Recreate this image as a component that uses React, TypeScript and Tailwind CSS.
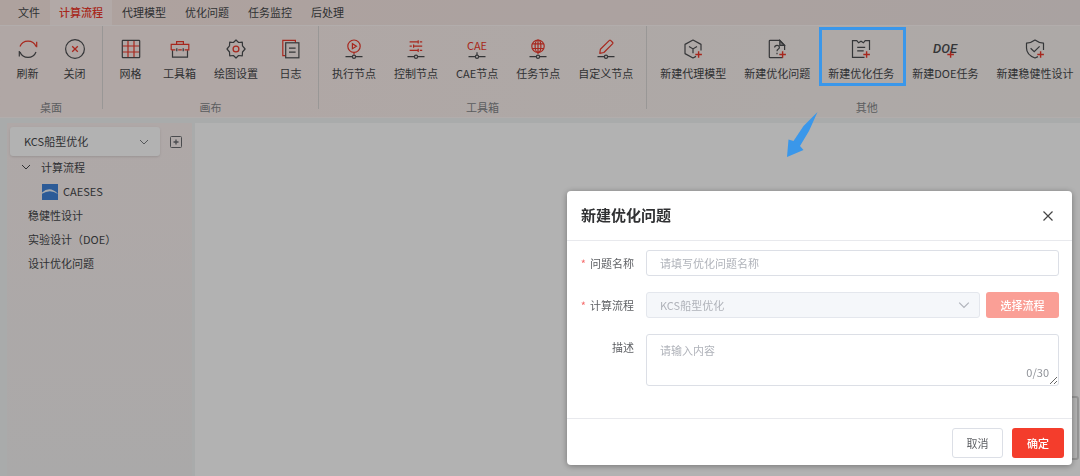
import { PropsWithChildren, ReactNode } from "react";

const RED = "#f0392b";
const INK = "#4c4e51";

const menus = ["文件", "计算流程", "代理模型", "优化问题", "任务监控", "后处理"];

function Icon({ children }: PropsWithChildren) {
  return (
    <svg
      viewBox="0 0 22 22"
      className="h-[22px] w-[22px] overflow-visible"
      fill="none"
      stroke={INK}
      strokeWidth="1.2"
      aria-hidden="true"
    >
      {children}
    </svg>
  );
}

// small connector drawn below every node icon
function NodeBase({ stem = false }: { stem?: boolean }) {
  return (
    <>
      <path d="M2.5 18.7h6.7M12.8 18.7h6.7" />
      <circle cx="11" cy="18.7" r="1.6" />
      {stem && <path d="M11 14.2v2.9" />}
    </>
  );
}

function Plus() {
  return <path d="M13.3 16.5h6.6M16.6 13.2v6.6" stroke={RED} strokeWidth="1.4" />;
}

const icons: Record<string, ReactNode> = {
  refresh: (
    <>
      <path d="M3 8.5A8.6 8.6 0 0 1 19 8.5M19.7 3.8v5.4" stroke={RED} />
      <path d="M19 14A8.6 8.6 0 0 1 3 14M2.3 18.4V13" />
    </>
  ),
  close: (
    <>
      <circle cx="11" cy="11" r="9.4" />
      <path d="m8.2 8.2 5.6 5.6M13.8 8.2l-5.6 5.6" stroke={RED} strokeWidth="1.3" />
    </>
  ),
  grid: (
    <>
      <path d="M8 2.5v17M14 2.5v17M2.5 8h17M2.5 14h17" stroke={RED} />
      <rect x="2.3" y="2.3" width="17.4" height="17.4" rx="0.6" />
    </>
  ),
  toolbox: (
    <>
      <path d="M3.5 12.3v6.9h15v-6.9M7.8 10.3v3M14.2 10.3v3" />
      <path d="M7.6 6.3V3.6h6.8v2.7M2.2 11.9V6.4h17.6v5.5h-4.2M2.2 11.9h4.2M9.2 11.9h3.6" stroke={RED} />
    </>
  ),
  gear: (
    <>
      <path
        d="m11 2 2.6 2.5 3.7-.4.2 3.8 2.6 3.1-2.6 3-.2 3.8-3.7-.3L11 20l-2.6-2.5-3.7.3-.2-3.8L2 11l2.5-3.1.2-3.8 3.7.4Z"
        strokeLinejoin="round"
      />
      <circle cx="11" cy="11" r="2.9" stroke={RED} strokeWidth="1.3" />
    </>
  ),
  log: (
    <>
      <path d="M5 17.6H2.8V2.3h12.6v2.2" stroke={RED} />
      <rect x="5.7" y="4.8" width="13.2" height="15" />
      <path d="M9 10.2h6.6M9 14.2h6.6" />
    </>
  ),
  run: (
    <>
      <circle cx="11" cy="8.2" r="6.2" stroke={RED} />
      <path d="M9.4 5.7v5l4-2.5ZM11 14.4v2" stroke={RED} />
      <NodeBase />
    </>
  ),
  control: (
    <>
      <path
        d="M4.6 3.8h8M14.8 3.8h2.4M13.2 2.2v3.2M4.6 8.1h2.2M9 8.1h8.2M8.6 6.5v3.2M4.6 12.4h8M14.8 12.4h2.4M13.2 10.8V14"
        stroke={RED}
      />
      <NodeBase />
    </>
  ),
  cae: (
    <>
      <text x="11" y="12" textAnchor="middle" fontSize="11" fill={RED} stroke="none">
        CAE
      </text>
      <NodeBase stem />
    </>
  ),
  task: (
    <>
      <circle cx="11" cy="8.2" r="6.2" stroke={RED} />
      <ellipse cx="11" cy="8.2" rx="2.9" ry="6.2" stroke={RED} />
      <path d="M5.4 5.9h11.2M5.4 10.5h11.2M11 2v14" stroke={RED} />
      <NodeBase />
    </>
  ),
  custom: (
    <>
      <path
        d="m4.8 15.4.6-4.2 9-8.8q.6-.5 1.2 0l2.1 2.1q.5.6 0 1.2l-8.8 8.8Z"
        stroke={RED}
        strokeLinejoin="round"
      />
      <NodeBase />
    </>
  ),
  model: (
    <>
      <path d="M19 12.5V6.4L11 2 3 6.4v9.2l8 4.4 3-1.6" strokeLinejoin="round" />
      <path d="m7 8.4 4 2.5 4-2.5M11 10.9v4.3" />
      <Plus />
    </>
  ),
  problem: (
    <>
      <path d="M18.6 12V7.3l-4.8-5H4.1q-.8 0-.8.8v15.8q0 .8.8.8h12.6" />
      <path d="M13.8 2.5v4.8h4.6Z" fill={INK} fillOpacity="0.4" />
      <path d="M8.6 9.5q.2-2.2 2.4-2.2t2.4 2q0 1.3-1.3 2-1.1.7-1.1 2M11 14.8v1.4" />
      <Plus />
    </>
  ),
  optimize: (
    <>
      <path d="M19.5 12V2.6h-4.3l-1.8 2.2-2.4-1.6-2.4 1.6-1.8-2.2H2.5v16.8h12" />
      <path d="M7.2 9.3h8M7.2 12.8h6.5" />
      <Plus />
    </>
  ),
  doe: (
    <>
      <text
        x="11"
        y="15"
        textAnchor="middle"
        fontSize="13"
        fontStyle="italic"
        fontWeight="500"
        fontFamily="Liberation Sans Narrow, Roboto, sans-serif"
        fill={INK}
        stroke="none"
      >
        DOE
      </text>
      <Plus />
    </>
  ),
  robust: (
    <>
      <path d="M19.5 12V5.2Q14.7 4.8 11 2 7.3 4.8 2.5 5.2V10q0 6.8 8.5 10l3-1.4" strokeLinejoin="round" />
      <path d="m6.6 10.3 3.6 3.4 5.4-5.4" />
      <Plus />
    </>
  ),
};

const groups = [
  {
    title: "桌面",
    items: [
      { icon: "refresh", label: "刷新" },
      { icon: "close", label: "关闭" },
    ],
  },
  {
    title: "画布",
    items: [
      { icon: "grid", label: "网格" },
      { icon: "toolbox", label: "工具箱" },
      { icon: "gear", label: "绘图设置" },
      { icon: "log", label: "日志" },
    ],
  },
  {
    title: "工具箱",
    items: [
      { icon: "run", label: "执行节点" },
      { icon: "control", label: "控制节点" },
      { icon: "cae", label: "CAE节点" },
      { icon: "task", label: "任务节点" },
      { icon: "custom", label: "自定义节点" },
    ],
  },
  {
    title: "其他",
    items: [
      { icon: "model", label: "新建代理模型" },
      { icon: "problem", label: "新建优化问题" },
      { icon: "optimize", label: "新建优化任务", marked: true },
      { icon: "doe", label: "新建DOE任务" },
      { icon: "robust", label: "新建稳健性设计" },
    ],
  },
];

function MenuBar() {
  return (
    <nav className="flex h-[25px] shrink-0 gap-px bg-linear-to-r from-[#fae9e3] to-[#f3e9e7] pl-[9px]">
      {menus.map((menu) => (
        <button
          key={menu}
          className={
            menu === "计算流程"
              ? "bg-[#fff3f0] px-[9px] font-medium text-[#f0392b]"
              : "px-[9px] text-[#45474a]"
          }
        >
          {menu}
        </button>
      ))}
    </nav>
  );
}

function Ribbon() {
  return (
    <div className="flex h-[93px] shrink-0 border-y border-[#fff8f6] bg-linear-to-r from-[#fdefec] to-[#f8f3f0]">
      {groups.map((group) => (
        <section
          key={group.title}
          className="flex h-[83px] shrink-0 flex-col border-r border-[#dcd8d7] px-1 last:border-r-0"
        >
          <div className="flex pt-[3px]">
            {group.items.map((item) => (
              <button
                key={item.label}
                className="flex min-w-[47px] flex-col items-center px-[9px] pt-[9px] pb-1"
              >
                <Icon>{icons[item.icon]}</Icon>
                <span className="mt-[5px] leading-4 whitespace-nowrap">{item.label}</span>
              </button>
            ))}
          </div>
          <h2 className="mt-[14px] text-center leading-4 text-[#85878a]">{group.title}</h2>
        </section>
      ))}
    </div>
  );
}

// callout frame and arrow, painted above the mask
function Callout() {
  return (
    <span className="absolute -top-px -right-[3px] left-0 h-[59px] border-[3px] border-[#3a97ea]">
      <svg
        viewBox="0 0 34 48"
        className="absolute top-[80px] -left-[36px] h-[48px] w-[34px]"
        fill="#3a97ea"
        aria-hidden="true"
      >
        <path d="M31.5 2 17.5 16 7.500 31 2.500 29.500 1 47 17.500 40 14 36 23 21Z" />
      </svg>
    </span>
  );
}

function CalloutLayer() {
  // repeats the ribbon's columns invisibly so the frame follows the marked button
  return (
    <div className="pointer-events-none absolute inset-x-0 top-0 z-20 flex pt-[28px]" aria-hidden="true">
      {groups.map((group) => (
        <div key={group.title} className="flex shrink-0 border-r border-transparent px-1">
          {group.items.map((item) => (
            <div key={item.label} className="relative h-[57px] min-w-[47px] px-[9px]">
              <span className="invisible whitespace-nowrap">{item.label}</span>
              {"marked" in item && <Callout />}
            </div>
          ))}
        </div>
      ))}
    </div>
  );
}

function Chevron({ className }: { className: string }) {
  return (
    <svg viewBox="0 0 10 10" className={className} fill="none" stroke="currentColor" aria-hidden="true">
      <path d="m1 3 4 4 4-4" />
    </svg>
  );
}

function Sidebar() {
  return (
    <aside className="w-[185px] shrink-0 bg-linear-to-b from-[#fbf1f0] to-[#f4f2f2] px-[3px] pt-1">
      <div className="flex items-center">
        <div className="relative w-[150px]">
          <select
            aria-label="项目"
            className="block h-[29px] w-full appearance-none rounded-[3px] bg-white pl-[14px] shadow-sm"
          >
            <option>KCS船型优化</option>
          </select>
          <Chevron className="pointer-events-none absolute top-[10px] right-[11px] h-[10px] w-[10px] text-[#7c7e82]" />
        </div>
        <button aria-label="添加" className="ml-[10px]">
          <svg viewBox="0 0 12 12" className="h-3 w-3" fill="none" stroke="#6a6c70" aria-hidden="true">
            <rect x="0.5" y="0.5" width="11" height="11" rx="1" />
            <path d="M3.5 6h5M6 3.5v5" strokeWidth="1.3" />
          </svg>
        </button>
      </div>
      <ul className="-mt-px leading-6">
        <li>
          <div className="flex items-center pl-[11px]">
            <Chevron className="h-[10px] w-[10px]" />
            <span className="ml-[10px]">计算流程</span>
          </div>
          <div className="flex items-center pl-8">
            <svg viewBox="0 0 16 16" className="mt-[2px] h-4 w-4" aria-hidden="true">
              <path d="M0 0h16v16H0Z" fill="#3f83d8" />
              <path d="M0 8.5Q8 1.5 16 10 8 4.5 0 9.8Z" fill="#eef4fb" />
            </svg>
            <span className="ml-[5px]">CAESES</span>
          </div>
        </li>
        <li className="pl-[18px]">稳健性设计</li>
        <li className="pl-[18px]">实验设计（DOE）</li>
        <li className="pl-[18px]">设计优化问题</li>
      </ul>
    </aside>
  );
}

function Label({ htmlFor, required, children }: PropsWithChildren<{ htmlFor: string; required?: boolean }>) {
  return (
    <label htmlFor={htmlFor} className="w-[67px] shrink-0 text-right leading-[26px] text-[#606266]">
      {required && <span className="mr-1 text-[#f56c6c]">*</span>}
      {children}
    </label>
  );
}

function ProblemDialog() {
  return (
    <div className="fixed inset-0 z-10 flex items-end justify-end bg-black/30 pr-2 pb-[11px] pl-2">
      <div
        role="dialog"
        aria-labelledby="dialog-title"
        className="w-full max-w-[505px] rounded-[4px] bg-white shadow-[0_1px_6px_rgba(0,0,0,0.35)]"
      >
        <header className="flex h-[50px] items-center justify-between border-b border-[#e8e9ed] pr-[19px] pl-[14px]">
          <h1 id="dialog-title" className="text-[15px] font-bold text-[#303133]">
            新建优化问题
          </h1>
          <button aria-label="关闭">
            <svg viewBox="0 0 10 10" className="h-[10px] w-[10px]" stroke="#444" strokeWidth="1.2" aria-hidden="true">
              <path d="m.5.5 9 9M9.5.5l-9 9" />
            </svg>
          </button>
        </header>
        <form className="flex flex-col gap-4 pt-[9px] pr-[13px]">
          <div className="flex gap-3">
            <Label htmlFor="name" required>
              问题名称
            </Label>
            <input
              id="name"
              placeholder="请填写优化问题名称"
              className="h-[26px] min-w-0 flex-1 rounded-[3px] border border-[#dcdfe6] px-[13px] outline-none placeholder:text-[#b0b3ba]"
            />
          </div>
          <div className="flex gap-3">
            <Label htmlFor="flow" required>
              计算流程
            </Label>
            <div className="flex min-w-0 flex-1 gap-[6px]">
              <div className="relative flex-1 text-[#b0b3ba]">
                <select
                  id="flow"
                  disabled
                  className="block h-[26px] w-full appearance-none rounded-[3px] border border-[#e4e7ed] bg-[#f5f7fa] px-[13px] opacity-100"
                >
                  <option>KCS船型优化</option>
                </select>
                <Chevron className="pointer-events-none absolute top-[7px] right-[10px] h-3 w-3" />
              </div>
              <button
                type="button"
                disabled
                className="h-[26px] w-[73px] rounded-[3px] bg-[#fa9f96] font-medium text-white"
              >
                选择流程
              </button>
            </div>
          </div>
          <div className="flex gap-3">
            <Label htmlFor="desc">描述</Label>
            <div className="relative flex-1">
              <textarea
                id="desc"
                placeholder="请输入内容"
                className="block h-[52px] w-full resize-y rounded-[3px] border border-[#dcdfe6] px-[13px] py-[7px] leading-4 outline-none placeholder:text-[#b0b3ba]"
              />
              <span className="absolute right-[10px] bottom-[6px] leading-4 text-[#909399]">0/30</span>
            </div>
          </div>
        </form>
        <footer className="mt-8 flex justify-end gap-[9px] border-t border-[#e8e9ed] pt-[9px] pr-2 pb-[7px]">
          <button className="h-[30px] w-[51px] rounded-[3px] border border-[#dcdfe6] text-[#606266]">取消</button>
          <button className="h-[30px] w-[52px] rounded-[3px] bg-[#f43d2c] font-medium text-white">确定</button>
        </footer>
      </div>
    </div>
  );
}

export default function App() {
  return (
    <div className="relative flex h-screen flex-col overflow-hidden bg-[#f3f5f5] font-['Noto_Sans_CJK_SC',sans-serif] text-[11px] text-[#45474a]">
      <MenuBar />
      <Ribbon />
      <main className="flex min-h-0 flex-1 gap-[3px] pt-[5px] pl-[7px]">
        <Sidebar />
        <div className="relative flex-1 bg-white">
          <div className="absolute right-px bottom-4 h-16 w-[120px] rounded-[3px] border-2 border-[#d4d4d4]" />
        </div>
      </main>
      <ProblemDialog />
      <CalloutLayer />
    </div>
  );
}
